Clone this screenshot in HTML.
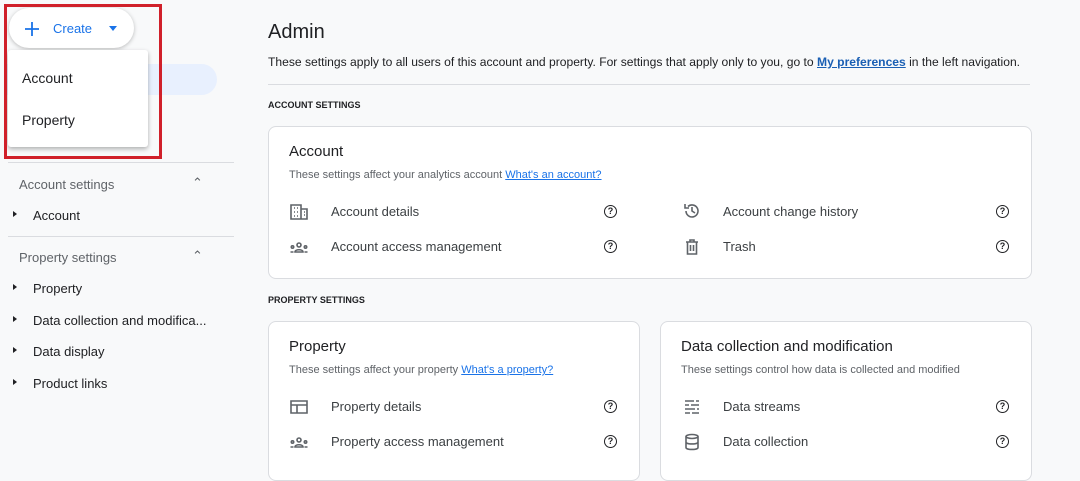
<!DOCTYPE html><html><head><style>
*{margin:0;padding:0;box-sizing:border-box}
body{width:1080px;height:463px;overflow:hidden;background:#f8f9fa;font-family:"Liberation Sans",sans-serif;color:#202124;position:relative}
.a{position:absolute;white-space:nowrap}
.card{position:absolute;background:#fff;border:1px solid #dadce0;border-radius:8px}
.t{font-size:13px;color:#3c4043}
.s{font-size:11px;color:#5f6368}
.lk{color:#1a73e8;text-decoration:underline}
.q{position:absolute;width:13px;height:13px;border:1.6px solid #202124;border-radius:50%;font-size:9px;font-weight:bold;text-align:center;line-height:10px}
svg.i{position:absolute;width:18px;height:18px;fill:none;stroke:#5f6368;stroke-width:1.6}
.nav{font-size:13px;color:#202124}
.tri{position:absolute;width:0;height:0;border-left:4px solid #202124;border-top:3.5px solid transparent;border-bottom:3.5px solid transparent}
</style></head><body>
<div class="a" style="left:6px;top:64px;width:211px;height:31px;background:#e8f0fe;border-radius:0 16px 16px 0"></div>
<div class="a" style="left:8px;top:162px;width:226px;height:1px;background:#dadce0"></div>
<div class="a" style="left:8px;top:236px;width:226px;height:1px;background:#dadce0"></div>
<div class="a nav" style="left:19px;top:177px;color:#5f6368">Account settings</div>
<div class="a" style="left:192px;top:175px;font-size:13px;color:#5f6368">&#8963;</div>
<div class="tri" style="left:13px;top:211px"></div><div class="a nav" style="left:33px;top:208px">Account</div>
<div class="a nav" style="left:19px;top:250px;color:#5f6368">Property settings</div>
<div class="a" style="left:192px;top:248px;font-size:13px;color:#5f6368">&#8963;</div>
<div class="tri" style="left:13px;top:284px"></div><div class="a nav" style="left:33px;top:281px">Property</div>
<div class="tri" style="left:13px;top:316px"></div><div class="a nav" style="left:33px;top:313px">Data collection and modifica...</div>
<div class="tri" style="left:13px;top:347px"></div><div class="a nav" style="left:33px;top:344px">Data display</div>
<div class="tri" style="left:13px;top:379px"></div><div class="a nav" style="left:33px;top:376px">Product links</div>
<div class="a" style="left:9px;top:8px;width:125px;height:40px;background:#fff;border-radius:20px;box-shadow:0 1px 4px rgba(0,0,0,.25)"></div>
<svg class="a" style="left:24px;top:21px" width="16" height="16"><path d="M8 1v14M1 8h14" stroke="#1a73e8" stroke-width="1.8"/></svg>
<div class="a" style="left:53px;top:21px;font-size:13px;color:#1a73e8">Create</div>
<div class="a" style="left:109px;top:26px;border-left:4.5px solid transparent;border-right:4.5px solid transparent;border-top:5px solid #1a73e8"></div>
<div class="a" style="left:8px;top:50px;width:140px;height:97px;background:#fff;border-radius:3px;box-shadow:0 2px 5px rgba(0,0,0,.3)"></div>
<div class="a" style="left:22px;top:70px;font-size:14px">Account</div>
<div class="a" style="left:22px;top:112px;font-size:14px">Property</div>
<div class="a" style="left:4px;top:4px;width:158px;height:155px;border:3px solid #d0202a"></div>
<div class="a" style="left:268px;top:21px;font-size:20px">Admin</div>
<div class="a" style="left:268px;top:55px;font-size:12.1px">These settings apply to all users of this account and property. For settings that apply only to you, go to <b class="lk" style="color:#1a5fb4">My preferences</b> in the left navigation.</div>
<div class="a" style="left:268px;top:84px;width:762px;height:1px;background:#dadce0"></div>
<div class="a" style="left:268px;top:100px;font-size:9px;font-weight:bold">ACCOUNT SETTINGS</div>
<div class="card" style="left:268px;top:126px;width:764px;height:153px"></div>
<div class="a" style="left:289px;top:143px;font-size:15px">Account</div>
<div class="a s" style="left:289px;top:169px">These settings affect your analytics account <span class="lk">What's an account?</span></div>
<svg class="i" style="left:290px;top:203px" viewBox="0 0 18 18"><path d="M1 2h10v14H1zM11 6h6v10h-6M4 5h1M7 5h1M4 9h1M7 9h1M4 13h1M7 13h1M14 9h1M14 12h1"/></svg>
<div class="a t" style="left:331px;top:204px">Account details</div><div class="q" style="left:604px;top:205px">?</div>
<svg class="i" style="left:290px;top:238px" viewBox="0 0 18 18"><circle cx="9" cy="7" r="2"/><path d="M5 14c0-3 8-3 8 0z"/><circle cx="2.5" cy="9" r="1.2"/><circle cx="15.5" cy="9" r="1.2"/><path d="M0.5 14h3M14.5 14h3"/></svg>
<div class="a t" style="left:331px;top:239px">Account access management</div><div class="q" style="left:604px;top:240px">?</div>
<svg class="i" style="left:683px;top:202px" viewBox="0 0 18 18"><path d="M3 9a6 6 0 1 0 2-4.5M2 2v4h4M9 5v4l3 2"/></svg>
<div class="a t" style="left:723px;top:204px">Account change history</div><div class="q" style="left:996px;top:205px">?</div>
<svg class="i" style="left:683px;top:238px" viewBox="0 0 18 18"><path d="M3 4h12M7 4V2h4v2M4.5 4v12h9V4M7.5 7v6M10.5 7v6"/></svg>
<div class="a t" style="left:723px;top:239px">Trash</div><div class="q" style="left:996px;top:240px">?</div>
<div class="a" style="left:268px;top:295px;font-size:9px;font-weight:bold">PROPERTY SETTINGS</div>
<div class="card" style="left:268px;top:321px;width:372px;height:160px"></div>
<div class="card" style="left:660px;top:321px;width:372px;height:160px"></div>
<div class="a" style="left:289px;top:338px;font-size:15px">Property</div>
<div class="a s" style="left:289px;top:364px">These settings affect your property <span class="lk">What's a property?</span></div>
<svg class="i" style="left:290px;top:398px" viewBox="0 0 18 18"><path d="M1 3h16v12H1zM1 7h16M7 7v8"/></svg>
<div class="a t" style="left:331px;top:399px">Property details</div><div class="q" style="left:604px;top:400px">?</div>
<svg class="i" style="left:290px;top:433px" viewBox="0 0 18 18"><circle cx="9" cy="7" r="2"/><path d="M5 14c0-3 8-3 8 0z"/><circle cx="2.5" cy="9" r="1.2"/><circle cx="15.5" cy="9" r="1.2"/><path d="M0.5 14h3M14.5 14h3"/></svg>
<div class="a t" style="left:331px;top:434px">Property access management</div><div class="q" style="left:604px;top:435px">?</div>
<div class="a" style="left:681px;top:338px;font-size:15px">Data collection and modification</div>
<div class="a s" style="left:681px;top:364px">These settings control how data is collected and modified</div>
<svg class="i" style="left:683px;top:398px" viewBox="0 0 18 18"><path d="M2 3h9M13 3h3M2 7h4M8 7h8M2 11h10M14 11h2M2 15h5M9 15h7"/></svg>
<div class="a t" style="left:723px;top:399px">Data streams</div><div class="q" style="left:996px;top:400px">?</div>
<svg class="i" style="left:683px;top:433px" viewBox="0 0 18 18"><ellipse cx="9" cy="3.5" rx="6" ry="2"/><path d="M3 3.5v11c0 2.6 12 2.6 12 0v-11M3 9c0 2.6 12 2.6 12 0"/></svg>
<div class="a t" style="left:723px;top:434px">Data collection</div><div class="q" style="left:996px;top:435px">?</div>
</body></html>
